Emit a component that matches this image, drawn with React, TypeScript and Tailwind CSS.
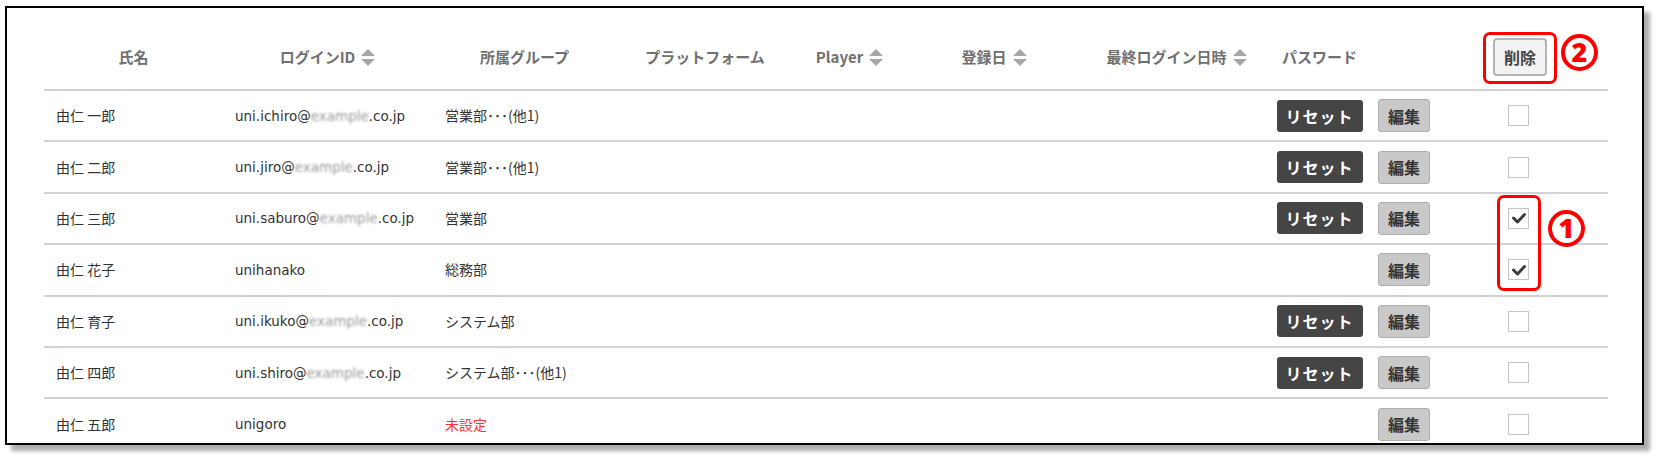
import React from 'react';

interface UserRow {
  name: string;
  loginPre: string;
  loginMasked?: boolean;
  group: string;
  unset?: boolean;
  canReset: boolean;
  checked: boolean;
}

const users: UserRow[] = [
  { name: '由仁 一郎', loginPre: 'uni.ichiro', loginMasked: true, group: '営業部･･･(他1)', canReset: true, checked: false },
  { name: '由仁 二郎', loginPre: 'uni.jiro', loginMasked: true, group: '営業部･･･(他1)', canReset: true, checked: false },
  { name: '由仁 三郎', loginPre: 'uni.saburo', loginMasked: true, group: '営業部', canReset: true, checked: true },
  { name: '由仁 花子', loginPre: 'unihanako', group: '総務部', canReset: false, checked: true },
  { name: '由仁 育子', loginPre: 'uni.ikuko', loginMasked: true, group: 'システム部', canReset: true, checked: false },
  { name: '由仁 四郎', loginPre: 'uni.shiro', loginMasked: true, group: 'システム部･･･(他1)', canReset: true, checked: false },
  { name: '由仁 五郎', loginPre: 'unigoro', group: '未設定', unset: true, canReset: false, checked: false },
];

const cols = 'grid grid-cols-[179px_210px_183px_178px_112px_177px_188px_97px_72px_168px]';

const SortIcon = () => (
  <svg width="16" height="19" viewBox="0 0 16 19" className="ml-[5px] shrink-0">
    <polygon points="1,8 8,1 15,8" fill="#a6a6a6" />
    <polygon points="1,11 8,18 15,11" fill="#a6a6a6" />
  </svg>
);

const Checkbox = ({ checked }: { checked: boolean }) => (
  <div className="w-[21px] h-[21px] border-[1.5px] border-[#c4c4c4] bg-white flex items-center justify-center">
    {checked && (
      <svg width="16" height="16" viewBox="0 0 16 16">
        <path d="M2.5 8 L6.5 12 L13.5 4.5" fill="none" stroke="#3c3c3c" strokeWidth="3" strokeLinecap="round" strokeLinejoin="round" />
      </svg>
    )}
  </div>
);

const Marker = ({ n, className }: { n: string; className: string }) => (
  <div
    className={`absolute w-[37px] h-[37px] rounded-full border-[4px] border-[#ff0000] flex items-center justify-center text-[#ff0000] text-[27px] font-black leading-none ${className}`}
    style={{ fontFamily: '"Noto Sans", sans-serif' }}
  >
    <span className="-mt-[2px]">{n}</span>
  </div>
);

const Head = ({ label, sort }: { label: string; sort?: boolean }) => (
  <div className="flex items-center justify-center">
    <span>{label}</span>
    {sort && <SortIcon />}
  </div>
);

export default function App() {
  return (
    <div
      className="relative w-[1663px] h-[461px] bg-white pl-[5px] pt-[6px]"
      style={{ fontFamily: '"Noto Sans CJK JP", "Noto Sans", sans-serif' }}
    >
      <div className="w-[1639px] h-[439px] border-2 border-black overflow-hidden pl-[37px] shadow-[6px_6px_4px_rgba(0,0,0,0.32)]">
        <div className="w-[1564px]">
          {/* header */}
          <div className={`${cols} h-[83px] pt-[17px] border-b-2 border-[#d2d2d2] items-center text-[15px] font-bold text-[#707070]`}>
            <Head label="氏名" />
            <Head label="ログインID" sort />
            <Head label="所属グループ" />
            <Head label="プラットフォーム" />
            <Head label="Player" sort />
            <Head label="登録日" sort />
            <Head label="最終ログイン日時" sort />
            <Head label="パスワード" />
            <div />
            <div className="pl-[53px]">
              <button className="w-[54px] h-[38px] bg-[#f2f2f2] border-2 border-[#b4b4b4] rounded-[4px] text-[16px] font-bold text-[#444]">
                削除
              </button>
            </div>
          </div>

          {/* body */}
          {users.map((u, i) => (
            <div
              key={i}
              className={`${cols} h-[51.4px] border-b-2 border-[#d2d2d2] items-center text-[14px] text-[#333]`}
            >
              <div className="pl-[12px]">{u.name}</div>
              <div
                className="pl-[12px] whitespace-nowrap text-[13.5px]"
                style={{ fontFamily: '"DejaVu Sans", "Noto Sans CJK JP", sans-serif' }}
              >
                {u.loginPre}
                {u.loginMasked && (
                  <>
                    @<span className="blur-[1.3px] text-[#999]">example</span>.co.jp
                  </>
                )}
              </div>
              <div className={`pl-[12px] whitespace-nowrap ${u.unset ? 'text-[#ff3030]' : ''}`}>{u.group}</div>
              <div />
              <div />
              <div />
              <div />
              <div className="flex justify-center">
                {u.canReset && (
                  <button className="w-[86px] h-[32px] bg-[#454545] rounded-[3px] text-white text-[16px] font-bold tracking-[1px]">
                    リセット
                  </button>
                )}
              </div>
              <div className="pl-[10px]">
                <button className="w-[52px] h-[33px] bg-[#c9c9c9] border border-[#adadad] rounded-[3px] text-[#333] text-[16px] font-bold">
                  編集
                </button>
              </div>
              <div className="pl-[68px]">
                <Checkbox checked={u.checked} />
              </div>
            </div>
          ))}
        </div>
      </div>

      {/* annotations */}
      <div className="absolute left-[1483px] top-[32px] w-[74px] h-[52px] border-[3px] border-[#ff0000] rounded-[7px]" />
      <Marker n="2" className="left-[1561px] top-[34px]" />
      <div className="absolute left-[1497px] top-[195px] w-[44px] h-[96px] border-[3px] border-[#ff0000] rounded-[7px]" />
      <Marker n="1" className="left-[1548px] top-[210px]" />
    </div>
  );
}
